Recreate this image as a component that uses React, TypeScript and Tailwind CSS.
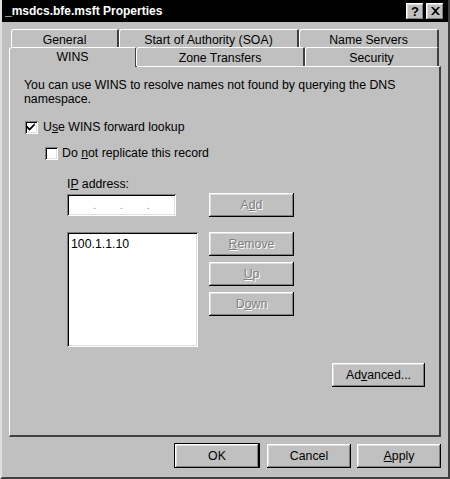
import React from 'react';

const raised =
  'bg-[#c0c0c0] shadow-[inset_-1px_-1px_#000,inset_1px_1px_#fff,inset_-2px_-2px_#808080,inset_2px_2px_#dfdfdf]';
const sunken =
  'bg-white shadow-[inset_1px_1px_#808080,inset_-1px_-1px_#fff,inset_2px_2px_#000,inset_-2px_-2px_#dfdfdf]';
const disabledText = 'text-[#808080] [text-shadow:1px_1px_0_#fff]';

const Btn: React.FC<{ w: string; disabled?: boolean; children: React.ReactNode }> = ({ w, disabled, children }) => (
  <div className={`${raised} ${w} h-[24px] flex items-center justify-center ${disabled ? disabledText : 'text-black'}`}>
    <span>{children}</span>
  </div>
);

const Tab: React.FC<{ w: string; active?: boolean; children: React.ReactNode }> = ({ w, active, children }) => (
  <div
    className={`${w} ${active ? 'h-[20px] -mr-[1px]' : 'h-[19px] pt-[2px]'} flex items-center justify-center border-l border-t border-white border-r-2 border-r-[#404040] rounded-tl-[3px] rounded-tr-[2px] bg-[#c0c0c0]`}
  >
    {children}
  </div>
);

const CheckBox: React.FC<{ checked?: boolean }> = ({ checked }) => (
  <div className={`${sunken} w-[13px] h-[13px] flex items-center justify-center`}>
    {checked && (
      <svg width="9" height="9" viewBox="0 0 7 7">
        <path d="M0 2 L2 4 L6 0 L6 2 L2 6 L0 4 Z" fill="#000" />
      </svg>
    )}
  </div>
);

const App: React.FC = () => {
  return (
    <div
      className="w-[450px] h-[479px] bg-[#c0c0c0] text-[12.3px] text-black border-l-2 border-l-[#dfdfdf] border-r-2 border-r-[#404040] border-b-2 border-b-[#404040] overflow-hidden"
      style={{ fontFamily: '"Liberation Sans", Arial, sans-serif' }}
    >
      {/* title bar */}
      <div className="h-[22px] bg-black flex items-center justify-between pl-[3px] pr-[4px]">
        <span className="text-white font-bold text-[12px]">_msdcs.bfe.msft Properties</span>
        <div className="flex gap-[2px]">
          <div className={`${raised} w-[18px] h-[17px] flex items-center justify-center font-bold text-[13px] leading-none`}>?</div>
          <div className={`${raised} w-[18px] h-[17px] flex items-center justify-center`}>
            <svg width="9" height="8" viewBox="0 0 9 8">
              <path d="M0 0 L2 0 L4.5 2.6 L7 0 L9 0 L5.5 4 L9 8 L7 8 L4.5 5.4 L2 8 L0 8 L3.5 4 Z" fill="#000" />
            </svg>
          </div>
        </div>
      </div>

      <div className="pl-[7px] pt-[7px]">
        {/* tab rows */}
        <div className="flex pl-[2px]">
          <Tab w="w-[108px]">General</Tab>
          <Tab w="w-[180px]">Start of Authority (SOA)</Tab>
          <Tab w="w-[140px]">Name Servers</Tab>
        </div>
        <div className="flex -mt-[1px] relative z-10">
          <Tab w="w-[128px]" active>
            <span className="-mt-[1px]">WINS</span>
          </Tab>
          <Tab w="w-[169px]">Zone Transfers</Tab>
          <Tab w="w-[134px]">Security</Tab>
        </div>

        {/* panel */}
        <div className="w-[432px] h-[371px] -mt-[1px] border-l border-t border-white border-r-2 border-b-2 border-r-[#404040] border-b-[#404040] pl-[14px] pt-[11px]">
          <p className="w-[400px] leading-[14px]">
            You can use WINS to resolve names not found by querying the DNS namespace.
          </p>

          <div className="flex items-center h-[13px] gap-[5px] mt-[15px] ml-[1px]">
            <CheckBox checked />
            <span>
              U<span className="underline">s</span>e WINS forward lookup
            </span>
          </div>
          <div className="flex items-center h-[13px] gap-[4px] mt-[13px] ml-[21px]">
            <CheckBox />
            <span>
              Do <span className="underline">n</span>ot replicate this record
            </span>
          </div>

          <div className="ml-[43px] mt-[17px]">
            <div className="leading-[14px]">
              I<span className="underline">P</span> address:
            </div>
            <div className="flex mt-[3px]">
              <div className={`${sunken} w-[109px] h-[22px] flex items-center justify-center gap-[24px] text-[#808080] text-[10px]`}>
                <span>.</span>
                <span>.</span>
                <span>.</span>
              </div>
              <div className="ml-[33px] -mt-[1px]">
                <Btn w="w-[85px]" disabled>
                  A<span className="underline">d</span>d
                </Btn>
              </div>
            </div>

            <div className="flex mt-[15px]">
              <div className={`${sunken} w-[131px] h-[115px] pl-[4px] pt-[3px]`}>100.1.1.10</div>
              <div className="ml-[11px] flex flex-col gap-[6px]">
                <Btn w="w-[85px]" disabled>
                  <span className="underline">R</span>emove
                </Btn>
                <Btn w="w-[85px]" disabled>
                  <span className="underline">U</span>p
                </Btn>
                <Btn w="w-[85px]" disabled>
                  D<span className="underline">o</span>wn
                </Btn>
              </div>
            </div>
          </div>

          <div className="flex justify-end pr-[14px] mt-[16px]">
            <Btn w="w-[93px]">
              Ad<span className="underline">v</span>anced...
            </Btn>
          </div>
        </div>

        {/* dialog buttons */}
        <div className="flex justify-end w-[432px] mt-[7px]">
          <div className="shadow-[0_0_0_1px_#000] w-[84px] h-[23px]">
            <Btn w="w-[84px]">OK</Btn>
          </div>
          <div className="ml-[8px]">
            <Btn w="w-[84px]">Cancel</Btn>
          </div>
          <div className="ml-[6px]">
            <Btn w="w-[84px]">
              <span className="underline">A</span>pply
            </Btn>
          </div>
        </div>
      </div>
    </div>
  );
};

export default App;
